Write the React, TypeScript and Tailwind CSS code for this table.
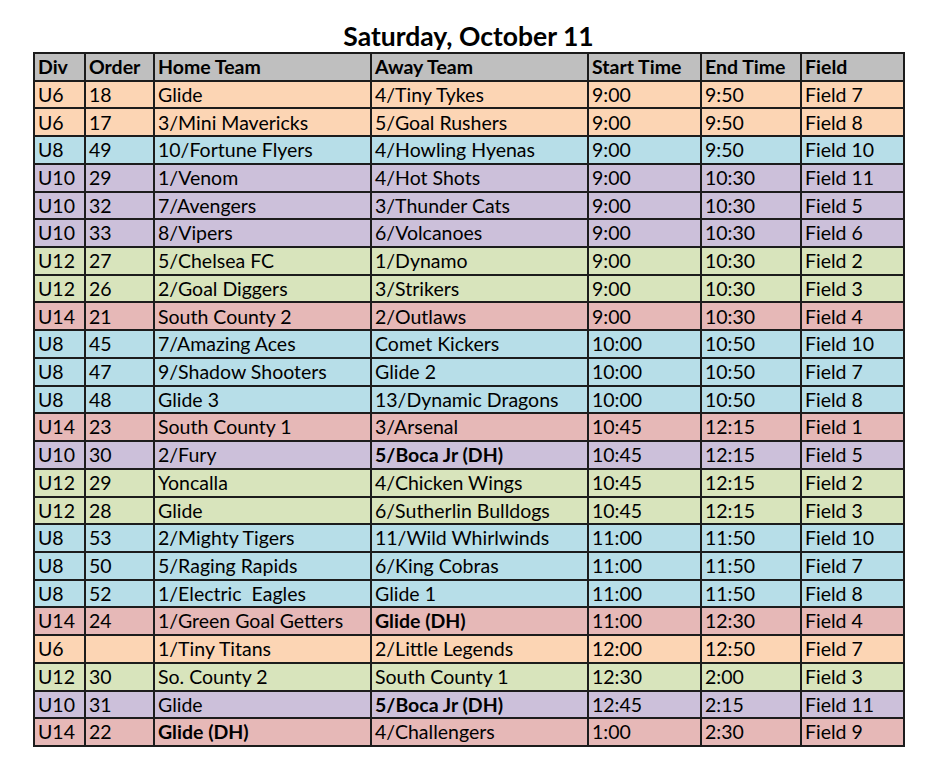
import React from 'react';

type Div = 'U6' | 'U8' | 'U10' | 'U12' | 'U14';

interface Game {
  div: Div;
  order: string;
  home: string;
  away: string;
  start: string;
  end: string;
  field: string;
  homeBold?: boolean;
  awayBold?: boolean;
}

const DIV_BG: Record<Div, string> = {
  U6: 'bg-[#fcd5b4]',
  U8: 'bg-[#b7dee8]',
  U10: 'bg-[#ccc0da]',
  U12: 'bg-[#d8e4bc]',
  U14: 'bg-[#e6b8b7]',
};

const GAMES: Game[] = [
  { div: 'U6', order: '18', home: 'Glide', away: '4/Tiny Tykes', start: '9:00', end: '9:50', field: 'Field 7' },
  { div: 'U6', order: '17', home: '3/Mini Mavericks', away: '5/Goal Rushers', start: '9:00', end: '9:50', field: 'Field 8' },
  { div: 'U8', order: '49', home: '10/Fortune Flyers', away: '4/Howling Hyenas', start: '9:00', end: '9:50', field: 'Field 10' },
  { div: 'U10', order: '29', home: '1/Venom', away: '4/Hot Shots', start: '9:00', end: '10:30', field: 'Field 11' },
  { div: 'U10', order: '32', home: '7/Avengers', away: '3/Thunder Cats', start: '9:00', end: '10:30', field: 'Field 5' },
  { div: 'U10', order: '33', home: '8/Vipers', away: '6/Volcanoes', start: '9:00', end: '10:30', field: 'Field 6' },
  { div: 'U12', order: '27', home: '5/Chelsea FC', away: '1/Dynamo', start: '9:00', end: '10:30', field: 'Field 2' },
  { div: 'U12', order: '26', home: '2/Goal Diggers', away: '3/Strikers', start: '9:00', end: '10:30', field: 'Field 3' },
  { div: 'U14', order: '21', home: 'South County 2', away: '2/Outlaws', start: '9:00', end: '10:30', field: 'Field 4' },
  { div: 'U8', order: '45', home: '7/Amazing Aces', away: 'Comet Kickers', start: '10:00', end: '10:50', field: 'Field 10' },
  { div: 'U8', order: '47', home: '9/Shadow Shooters', away: 'Glide 2', start: '10:00', end: '10:50', field: 'Field 7' },
  { div: 'U8', order: '48', home: 'Glide 3', away: '13/Dynamic Dragons', start: '10:00', end: '10:50', field: 'Field 8' },
  { div: 'U14', order: '23', home: 'South County 1', away: '3/Arsenal', start: '10:45', end: '12:15', field: 'Field 1' },
  { div: 'U10', order: '30', home: '2/Fury', away: '5/Boca Jr (DH)', awayBold: true, start: '10:45', end: '12:15', field: 'Field 5' },
  { div: 'U12', order: '29', home: 'Yoncalla', away: '4/Chicken Wings', start: '10:45', end: '12:15', field: 'Field 2' },
  { div: 'U12', order: '28', home: 'Glide', away: '6/Sutherlin Bulldogs', start: '10:45', end: '12:15', field: 'Field 3' },
  { div: 'U8', order: '53', home: '2/Mighty Tigers', away: '11/Wild Whirlwinds', start: '11:00', end: '11:50', field: 'Field 10' },
  { div: 'U8', order: '50', home: '5/Raging Rapids', away: '6/King Cobras', start: '11:00', end: '11:50', field: 'Field 7' },
  { div: 'U8', order: '52', home: '1/Electric  Eagles', away: 'Glide 1', start: '11:00', end: '11:50', field: 'Field 8' },
  { div: 'U14', order: '24', home: '1/Green Goal Getters', away: 'Glide (DH)', awayBold: true, start: '11:00', end: '12:30', field: 'Field 4' },
  { div: 'U6', order: '', home: '1/Tiny Titans', away: '2/Little Legends', start: '12:00', end: '12:50', field: 'Field 7' },
  { div: 'U12', order: '30', home: 'So. County 2', away: 'South County 1', start: '12:30', end: '2:00', field: 'Field 3' },
  { div: 'U10', order: '31', home: 'Glide', away: '5/Boca Jr (DH)', awayBold: true, start: '12:45', end: '2:15', field: 'Field 11' },
  { div: 'U14', order: '22', home: 'Glide (DH)', homeBold: true, away: '4/Challengers', start: '1:00', end: '2:30', field: 'Field 9' },
];

const HEADERS = ['Div', 'Order', 'Home Team', 'Away Team', 'Start Time', 'End Time', 'Field'];
const WIDTHS = [51, 69, 217, 217, 113, 100, 103];

const cell = 'border-2 border-[#1c1c1c] px-[3px] py-0 h-[27.72px] leading-none whitespace-pre text-left align-middle';

export default function App() {
  return (
    <div className="w-[942px] h-[778px] bg-white text-black font-['Lato','Liberation_Sans',sans-serif]">
      {/* Title */}
      <div className="h-[52px] pl-[33px] w-[904px] flex items-end justify-center pb-[3px]">
        <h1 className="text-[26.5px] font-bold leading-none">Saturday, October 11</h1>
      </div>

      <table className="ml-[33px] w-[870px] table-fixed border-collapse text-[19.5px]">
        <colgroup>
          {WIDTHS.map((w, i) => (
            <col key={i} style={{ width: w }} />
          ))}
        </colgroup>
        <thead>
          <tr className="bg-[#bfbfbf]">
            {HEADERS.map(h => (
              <th key={h} className={`${cell} font-bold`}>{h}</th>
            ))}
          </tr>
        </thead>
        <tbody>
          {GAMES.map((g, i) => (
            <tr key={i} className={DIV_BG[g.div]}>
              <td className={cell}>{g.div}</td>
              <td className={cell}>{g.order}</td>
              <td className={`${cell} ${g.homeBold ? 'font-bold' : ''}`}>{g.home}</td>
              <td className={`${cell} ${g.awayBold ? 'font-bold' : ''}`}>{g.away}</td>
              <td className={cell}>{g.start}</td>
              <td className={cell}>{g.end}</td>
              <td className={cell}>{g.field}</td>
            </tr>
          ))}
        </tbody>
      </table>
    </div>
  );
}
